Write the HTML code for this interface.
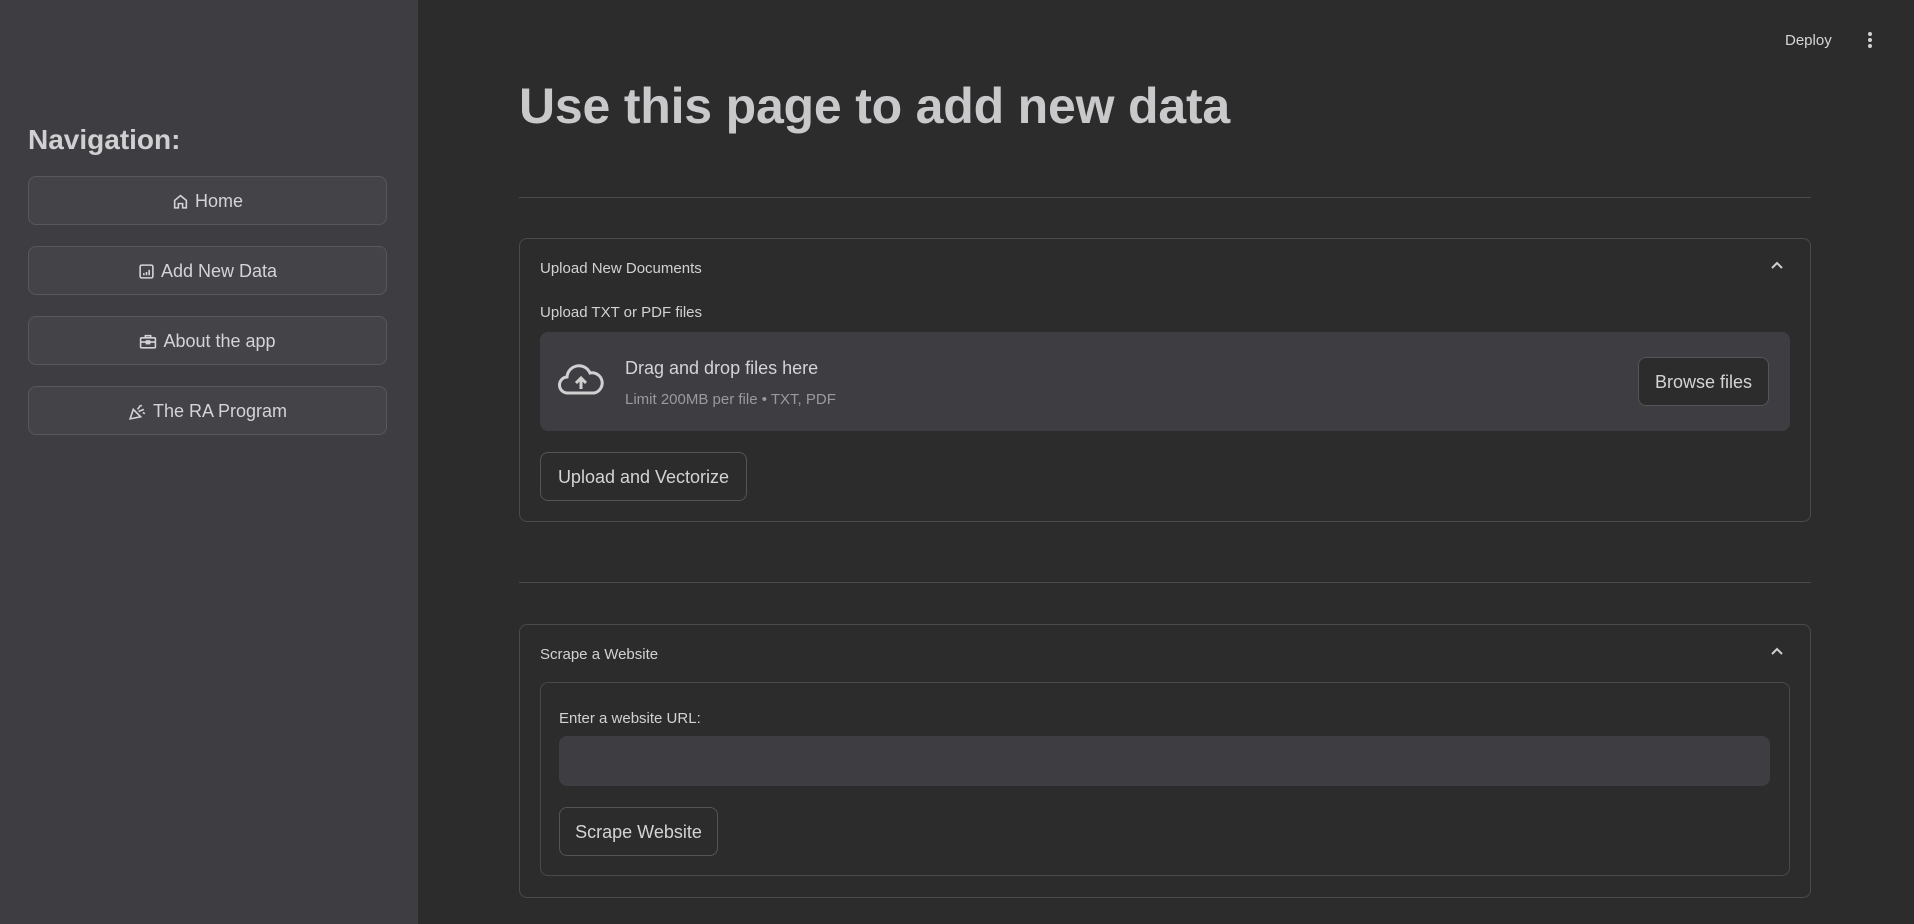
<!DOCTYPE html>
<html><head><meta charset="utf-8"><style>
*{box-sizing:border-box;margin:0;padding:0}
body{width:1914px;height:924px;background:#2c2c2c;font-family:"Liberation Sans",sans-serif;color:#d2d2d4;position:relative;overflow:hidden}
.a{position:absolute}
.side{left:0;top:0;width:418px;height:924px;background:#3e3d42}
.nb{position:absolute;left:28px;width:359px;height:49px;border:1px solid #58575c;border-radius:8px;background:#444348;display:flex;align-items:center;justify-content:center;font-size:18px;color:#d4d4d6;gap:6px;padding-top:2px}
.btn{position:absolute;border:1px solid #545357;border-radius:8px;display:flex;align-items:center;justify-content:center;font-size:18px;color:#d4d4d6;background:#2c2c2c;padding-top:2px}
.hr{position:absolute;left:519px;width:1292px;height:1px;background:#4a4a4d}
.exp{position:absolute;left:519px;width:1292px;border:1px solid #4a4a4d;border-radius:8px}
.s15{font-size:15px}
</style></head><body>
<div class="a side"></div>
<div class="a" style="left:28px;top:124px;font-size:28px;font-weight:bold;color:#d0d0d2">Navigation:</div>
<div class="nb" style="top:176px"><svg width="17" height="17" viewBox="0 0 16 16" fill="none" stroke="#d4d4d6" stroke-width="1.5"><path d="M2.5 7 8 2.5 13.5 7V14H10V10H6V14H2.5Z"/></svg>Home</div>
<div class="nb" style="top:246px"><svg width="17" height="17" viewBox="0 0 16 16" fill="none" stroke="#d4d4d6" stroke-width="1.5"><rect x="2" y="2" width="12" height="12" rx="1.5"/><path d="M5.5 11.5v-2M8 11.5v-3M10.5 11.5v-5"/></svg>Add New Data</div>
<div class="nb" style="top:316px"><svg width="18" height="17" viewBox="0 0 17 16" fill="none" stroke="#d4d4d6" stroke-width="1.5"><rect x="1.5" y="4.5" width="14" height="9.5" rx="1"/><path d="M6 4.5V2.5h5v2M1.5 8.5h14"/><rect x="7" y="7.5" width="3" height="2.5" fill="#d4d4d6"/></svg>About the app</div>
<div class="nb" style="top:386px"><svg width="19" height="17" viewBox="0 0 18 16" fill="none" stroke="#d4d4d6" stroke-width="1.5"><path d="M2 15 5 6l7 7z"/><path d="M9 6l3-4M10 8l5-2M12 3l1-1M14 9l2 1"/></svg>The RA Program</div>

<div class="a" style="left:1785px;top:32px;font-size:15px;color:#d6d6d8">Deploy</div>
<div class="a" style="left:1868px;top:32px;width:4px"><div style="width:4px;height:4px;border-radius:2px;background:#d0d0d0;margin-bottom:2px"></div><div style="width:4px;height:4px;border-radius:2px;background:#d0d0d0;margin-bottom:2px"></div><div style="width:4px;height:4px;border-radius:2px;background:#d0d0d0"></div></div>

<div class="a" style="left:519px;top:77px;font-size:50px;font-weight:bold;color:#c9c9cb;letter-spacing:-0.2px">Use this page to add new data</div>
<div class="hr" style="top:197px"></div>

<div class="exp" style="top:238px;height:284px"></div>
<div class="a s15" style="left:540px;top:260px">Upload New Documents</div>
<svg class="a" style="left:1770px;top:260px" width="14" height="10" viewBox="0 0 14 10" fill="none" stroke="#d0d0d0" stroke-width="2"><path d="M2 8l5-5 5 5"/></svg>
<div class="a s15" style="left:540px;top:304px">Upload TXT or PDF files</div>
<div class="a" style="left:540px;top:332px;width:1250px;height:99px;background:#3e3d42;border-radius:8px"></div>
<svg class="a" style="left:558px;top:363px" width="46" height="34" viewBox="0 0 46 34" fill="none" stroke="#d0d0d0" stroke-width="3"><path d="M12 30H10a8 8 0 0 1-1-16A12 12 0 0 1 32 10a9 9 0 0 1 4 20H12z"/><path d="M23 26V15M18 20l5-5 5 5" stroke-width="3"/></svg>
<div class="a" style="left:625px;top:358px;font-size:18px;color:#d4d4d6">Drag and drop files here</div>
<div class="a" style="left:625px;top:391px;font-size:15px;color:#9a9a9e">Limit 200MB per file • TXT, PDF</div>
<div class="btn" style="left:1638px;top:357px;width:131px;height:49px">Browse files</div>
<div class="btn" style="left:540px;top:452px;width:207px;height:49px">Upload and Vectorize</div>

<div class="hr" style="top:582px"></div>
<div class="exp" style="top:624px;height:274px"></div>
<div class="a s15" style="left:540px;top:646px">Scrape a Website</div>
<svg class="a" style="left:1770px;top:646px" width="14" height="10" viewBox="0 0 14 10" fill="none" stroke="#d0d0d0" stroke-width="2"><path d="M2 8l5-5 5 5"/></svg>
<div class="a" style="left:540px;top:682px;width:1250px;height:194px;border:1px solid #4a4a4d;border-radius:8px"></div>
<div class="a s15" style="left:559px;top:710px">Enter a website URL:</div>
<div class="a" style="left:559px;top:736px;width:1211px;height:50px;background:#3e3d42;border-radius:8px"></div>
<div class="btn" style="left:559px;top:807px;width:159px;height:49px">Scrape Website</div>
</body></html>
